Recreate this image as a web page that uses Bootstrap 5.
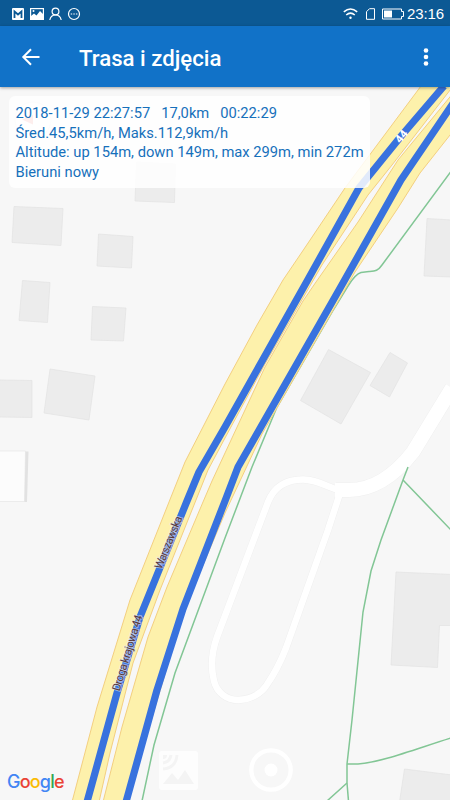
<!DOCTYPE html>
<html lang="pl">
  <head>
    <meta charset="UTF-8" />
    <meta name="viewport" content="width=device-width, initial-scale=1.0" />
    <title>Trasa i zdjęcia</title>
    <link
      href="https://cdn.jsdelivr.net/npm/bootstrap@5.3.0/dist/css/bootstrap.min.css"
      rel="stylesheet"
    />
    <style>
      body {
        font-family: Roboto, "Liberation Sans", sans-serif;
        background-color: #f7f7f7;
      }
      svg {
        display: block;
      }
      .status-bar {
        height: 26px;
        background-color: #0c5994;
        padding: 1px 6px 0 12px;
      }
      .status-clock {
        font-family: "Liberation Sans", sans-serif;
        font-size: 15px;
        line-height: 1;
        letter-spacing: -0.1px;
        margin-left: 3px;
      }
      .app-bar {
        height: 61px;
        background-color: #1172c8;
        padding: 0 17px 0 19px;
        box-shadow: 0 1px 3px rgba(0, 0, 0, 0.35);
        z-index: 2;
      }
      .app-title {
        font-size: 22.2px;
        font-weight: 500;
        line-height: 1;
        margin-left: 36px;
        padding-top: 3px;
      }
      .icon-btn {
        line-height: 0;
      }
      .trip-info {
        top: 9px;
        left: 9px;
        width: 361px;
        height: 92px;
        padding: 8px 0 0 6.5px;
        border-radius: 6px;
        background-color: rgba(255, 255, 255, 0.85);
        color: #1670bb;
        font-size: 14.72px;
        line-height: 19.6px;
        white-space: pre;
      }
      .google-logo {
        left: 7px;
        bottom: 6px;
        font-family: Inter, sans-serif;
        font-size: 18px;
        font-weight: 500;
        line-height: 24px;
        letter-spacing: -0.8px;
      }
      .map-tools {
        left: 158px;
        bottom: 8px;
        gap: 50px;
      }
    </style>
  </head>
  <body>
    <div class="d-flex flex-column vh-100 overflow-hidden">
      <div class="status-bar d-flex align-items-center justify-content-between text-white flex-shrink-0">
        <svg width="70" height="14" viewBox="0 0 70 14" fill="none" stroke="#fff" stroke-width="1.2">
          <rect x="0" y="1" width="12" height="12" rx="1" fill="#fff" stroke="none" />
          <path d="M2.5 11V4.5L6 7.5 9.5 4.5V11" stroke="#0c5994" stroke-width="1.8" />
          <rect x="18.6" y="1.6" width="12.8" height="10.8" />
          <path d="M19 11.5V9L22 6.5 24.5 8.5 28 4 31 7V12H19Z" fill="#fff" stroke="none" />
          <circle cx="21.5" cy="4" r="1" fill="#fff" stroke="none" />
          <circle cx="43.5" cy="4.5" r="3.4" />
          <path d="M37.8 13C38.5 9.5 40.5 8 43.5 8S48.500 9.500 49.200 13" />
          <circle cx="62" cy="7" r="5.500" />
          <path d="M58.700 7h1.500M61.300 7h1.500M63.900 7h1.500" />
        </svg>
        <div class="d-flex align-items-center">
          <svg width="61" height="14" viewBox="0 0 61 14" fill="none" stroke="#fff">
            <path d="M.8 4.8Q7.500-.8 14.200 4.800M3.200 8Q7.500 4.200 11.800 8" stroke-width="1.500" />
            <circle cx="7.500" cy="10.800" r="1.200" fill="#fff" stroke="none" />
            <path d="M26.500 1.700H31.500V12.300H23.500V4.700Z" />
            <path d="M39.500 2H58.500V4.500H60.500V9.500H58.500V12H39.500Z" />
            <rect x="41" y="3.500" width="8" height="7" fill="#fff" stroke="none" />
          </svg>
          <span class="status-clock">23:16</span>
        </div>
      </div>

      <nav class="app-bar d-flex align-items-center text-white flex-shrink-0 position-relative">
        <a href="#" class="icon-btn text-white">
          <svg width="24" height="24" viewBox="0 0 24 24" fill="none" stroke="#fff" stroke-width="2">
            <path d="M20.500 12H4.500M12 4.300L4.300 12 12 19.700" />
          </svg>
        </a>
        <h1 class="app-title mb-0">Trasa i zdjęcia</h1>
        <a href="#" class="icon-btn text-white ms-auto">
          <svg width="14" height="20" viewBox="0 0 14 20" fill="#fff">
            <circle cx="7" cy="3.500" r="2.300" />
            <circle cx="7" cy="10" r="2.300" />
            <circle cx="7" cy="16.500" r="2.300" />
          </svg>
        </a>
      </nav>

      <main class="flex-grow-1 position-relative overflow-hidden">
        <!-- map coordinates are screen pixels, the map starts below the bars -->
        <svg width="450" height="713" viewBox="0 87 450 713" fill="none">
          <rect y="87" width="450" height="713" fill="#f7f7f7" />

          <!-- buildings -->
          <g fill="#ececec" stroke="#e2e2e2" stroke-width=".7">
            <path d="M14 206.500L63 208.500 61 245.500 12 242.500Z" />
            <path d="M98.500 234L133 236.500 131.500 268 97 266Z" />
            <path d="M136.500 162L175.500 164 174.500 202.500 135 201Z" />
            <path d="M22.500 280.500L50 282.500 47.500 322.500 19 320.500Z" />
            <path d="M92.500 306.500L126 308 123.500 341 91 340Z" />
            <path d="M50 369L95 376 89 420 44 413Z" />
            <path d="M-2 380L32 380.500V417.500L-2 417Z" />
            <path d="M328.500 349.500L370.500 372.500 341 424 300.500 400.500Z" />
            <path d="M390 352.500L407.500 363 389.500 397 370 385.500Z" />
            <path d="M427 218.500L452 220V277L424 276Z" />
            <path d="M396 572L452 574.500V625.500H439.500L437.500 667.500 391 665Z" />
            <path d="M404.500 769L452 775V802H399.500Z" />
          </g>
          <path d="M-2 451H25.500L24.500 501.500H-2Z" fill="#fcfcfc" stroke="#e6e6e6" stroke-width=".7" />
          <path d="M25.500 451.500H28.500L27 502H24.500Z" fill="#e2e2e2" />

          <!-- side street with the loop -->
          <g stroke-linejoin="round">
            <path d="M338 490C322 484 314 479.500 303 479.500 286 479.500 274 487 268 502L217 637C211 654 211 669 214 681 217 693 227 700 238 700 253 699 262 692 266 686 273 676 281 661 286 648L328 530 341 490" stroke="#f0f0f0" stroke-width="7.500" />
            <path d="M336 490H349C374 490 395 475 413 452L452 388" stroke="#f0f0f0" stroke-width="15" />
            <path d="M338 490C322 484 314 479.500 303 479.500 286 479.500 274 487 268 502L217 637C211 654 211 669 214 681 217 693 227 700 238 700 253 699 262 692 266 686 273 676 281 661 286 648L328 530 341 490" stroke="#fff" stroke-width="6.500" />
            <path d="M335 490H349C374 490 395 475 413 452L452 388" stroke="#fff" stroke-width="14" />
          </g>

          <!-- paths -->
          <g stroke="#82c695" stroke-width="1.500">
            <path d="M452 170L382 265C378 271 375 271 369 271.500L361 272.500C357 273.500 353 278 348 286L332 312 277 407 252 467 225 538 175 673 154 745 142 801" />
            <path d="M408 467L403 480 381 540 371 571 363 612 352 720 347 764V783L348.500 801" />
            <path d="M403 480L451 530M347 764H358C382 762 410 751 451 738M347 783L327 801" />
          </g>

          <!-- dual carriageway -->
          <g fill="#fdf1ab" stroke="#f3cf80" stroke-width="1">
            <path d="M421 86L345 188 302 252 283 280 257 325 225 384 185 462 171 497 130 600 97 707 72 802H99L110 753 133 663 160 590 196 500 208 470 225 438 265 364 322 265 368 195 392 165 454 85Z" />
            <path d="M454 92L398 160 358 222 316 282 303 301 265 367 225 453 212 481 203 502 167 587 148 637 122 727 103 802H127L184 610 225 513 262 434 355 272 398 208 420 173 454 130Z" />
          </g>

          <!-- recorded track -->
          <g stroke="#3872de" stroke-width="7.200" stroke-linejoin="round">
            <path d="M444 86L402 135 359 188 306 283 225 427 199 472 187 501 140 617 117 693 87 802" />
            <path d="M454 102L401 180 343 283 238 467 225 501 183 609 157 690 126 802" />
          </g>

          <g font-family="Roboto, sans-serif" text-anchor="middle">
            <text transform="translate(404.500 139) rotate(-51)" font-size="11.500" font-weight="700" fill="#fff">44</text>
            <g font-size="11.500" fill="#5c3a3a" stroke="#dfe3f0" stroke-opacity=".6" stroke-width="1.800" paint-order="stroke">
              <text transform="translate(172 544) rotate(-68)" textLength="56">Warszawska</text>
              <text transform="translate(131 654) rotate(-73)" textLength="79">Droga krajowa 44</text>
            </g>
          </g>

          <!-- compass, visible through the trip panel -->
          <circle cx="33" cy="120" r="18" fill="#fafafa" stroke="#e8e8e8" />
          <path d="M22 119.500L33 115V124.500Z" fill="#ef8b85" />
        </svg>

        <div class="trip-info position-absolute">2018-11-29 22:27:57   17,0km   00:22:29
Śred.45,5km/h, Maks.112,9km/h
Altitude: up 154m, down 149m, max 299m, min 272m
Bieruni nowy</div>

        <div class="google-logo position-absolute d-flex">
          <span style="color: #4285f4">G</span><span style="color: #ea4335">o</span><span style="color: #fbbc05">o</span><span style="color: #4285f4">g</span><span style="color: #34a853">l</span><span style="color: #ea4335">e</span>
        </div>

        <div class="map-tools position-absolute d-flex align-items-center">
          <svg width="41" height="41" viewBox="0 0 41 41">
            <rect x="1" y="1" width="39" height="39" rx="3" fill="#fdfdfd" />
            <path d="M5 34L14 23 20 30 27 20 36 34Z" fill="#f4f4f4" />
            <path d="M5 13Q12 12 13 5M5 19Q18 18 19 5" fill="none" stroke="#f4f4f4" stroke-width="3" />
            <path d="M5 9V5H9Q9 9 5 9Z" fill="#f4f4f4" />
          </svg>
          <svg width="44" height="44" viewBox="0 0 44 44">
            <circle cx="22" cy="22" r="19.700" fill="none" stroke="#fff" stroke-width="4.300" />
            <circle cx="22" cy="22" r="6.500" fill="#fff" />
          </svg>
        </div>
      </main>
    </div>

    <script src="https://cdn.jsdelivr.net/npm/bootstrap@5.3.0/dist/js/bootstrap.bundle.min.js"></script>
  </body>
</html>
